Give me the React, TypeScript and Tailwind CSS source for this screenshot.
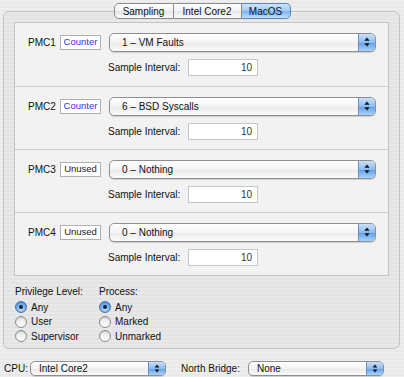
import { ReactNode } from "react";

const font = { fontFamily: '"Liberation Sans", Arial, sans-serif' };

function Arrows({ small }: { small?: boolean }) {
  return (
    <svg width="6" height={small ? 9 : 10} viewBox="0 0 6 10" className="block">
      <path d="M3 0.5 L5.6 3.8 L0.4 3.8 Z" fill="#111" />
      <path d="M3 9.5 L5.6 6.2 L0.4 6.2 Z" fill="#111" />
    </svg>
  );
}

function Popup({ label, className, small }: { label: string; className: string; small?: boolean }) {
  return (
    <div
      className={`flex items-stretch rounded-[5px] border border-[#8f8f8f] bg-[linear-gradient(to_bottom,#ffffff,#f3f3f3_50%,#e9e9e9_51%,#fbfbfb)] shadow-[0_1px_1px_rgba(0,0,0,0.15)] ${className}`}
    >
      <div className={`flex flex-1 items-center text-[10px] text-[#111] ${small ? "pl-[8px]" : "pl-[12px]"}`}>{label}</div>
      <div className="flex w-[17px] items-center justify-center rounded-r-[4px] border-l border-[#6b8fc4] bg-[linear-gradient(to_bottom,#c9e0fb,#8dbbf0_50%,#5e9de8_51%,#a8d4fb)]">
        <Arrows small={small} />
      </div>
    </div>
  );
}

function Radio({ on, children }: { on?: boolean; children: ReactNode }) {
  return (
    <div className="flex h-[14.5px] items-center gap-[4px] text-[10px] text-[#111]">
      {on ? (
        <span className="flex h-[12px] w-[12px] items-center justify-center rounded-full border border-[#4d6f9e] bg-[radial-gradient(circle_at_50%_70%,#bfe0ff,#5b9ae6_70%,#3f78c4)]">
          <span className="h-[4px] w-[4px] rounded-full bg-[#10203a]" />
        </span>
      ) : (
        <span className="h-[12px] w-[12px] rounded-full border border-[#8c8c8c] bg-[linear-gradient(to_bottom,#e6e6e6,#ffffff)] shadow-[inset_0_1px_1px_rgba(0,0,0,0.15)]" />
      )}
      <span>{children}</span>
    </div>
  );
}

const rows = [
  { pmc: "PMC1", kind: "Counter", event: "1 – VM Faults" },
  { pmc: "PMC2", kind: "Counter", event: "6 – BSD Syscalls" },
  { pmc: "PMC3", kind: "Unused", event: "0 – Nothing" },
  { pmc: "PMC4", kind: "Unused", event: "0 – Nothing" },
];

export default function App() {
  return (
    <div
      style={font}
      className="flex h-[377px] w-[404px] flex-col overflow-hidden bg-[repeating-linear-gradient(to_bottom,#eeeeee_0px,#eeeeee_2px,#e9e9e9_2px,#e9e9e9_4px)] pt-[3px]"
    >
      {/* tabs */}
      <div className="relative z-10 flex h-[16px] justify-center text-[10px] text-[#111]">
        <div className="flex w-[60px] items-center justify-center rounded-l-[5px] border border-[#8a8a8a] bg-[linear-gradient(to_bottom,#ffffff,#f2f2f2_50%,#e6e6e6_51%,#fafafa)]">
          Sampling
        </div>
        <div className="flex w-[68px] items-center justify-center border-y border-r border-[#8a8a8a] bg-[linear-gradient(to_bottom,#ffffff,#f2f2f2_50%,#e6e6e6_51%,#fafafa)]">
          Intel Core2
        </div>
        <div className="flex w-[49px] items-center justify-center rounded-r-[5px] border-y border-r border-[#5f84bb] bg-[linear-gradient(to_bottom,#cfe5fc,#9ec8f4_50%,#78b1ee_51%,#bfe0fd)]">
          MacOS
        </div>
      </div>

      {/* tab panel */}
      <div className="mx-[3px] -mt-[8px] flex h-[338px] w-[397px] flex-col rounded-[6px] border border-[#c4c4c4] bg-[rgba(0,0,0,0.025)] px-[10px] pt-[10px]">
        <div className="flex flex-col border border-[#c2c2c2] bg-[#f2f2f2]">
          {rows.map((r, i) => (
            <div
              key={r.pmc}
              className={`flex h-[63px] flex-col pl-[13px] pt-[10px] ${i > 0 ? "border-t border-[#cfcfcf]" : ""}`}
            >
              <div className="flex h-[18px] items-center">
                <span className="w-[32px] text-[10px] text-[#111]">{r.pmc}</span>
                <span
                  className={`flex h-[15px] w-[41px] items-center justify-center border border-[#b0b0b0] bg-white text-[9.5px] ${r.kind === "Counter" ? "text-[#3434d8]" : "text-[#222]"}`}
                >
                  {r.kind}
                </span>
                <Popup label={r.event} className="ml-[8px] h-[19px] w-[267px]" />
              </div>
              <div className="mt-[8px] flex h-[16px] items-center pl-[80px]">
                <span className="w-[80px] text-[10px] text-[#111]">Sample Interval:</span>
                <span className="flex h-[17px] w-[70px] items-center justify-end border border-[#c6c6c6] bg-white pr-[5px] text-[10px] text-[#333]">
                  10
                </span>
              </div>
            </div>
          ))}
        </div>

        {/* privilege / process */}
        <div className="mt-[8px] flex pl-[1px]">
          <div className="flex w-[84px] flex-col">
            <span className="mb-[2px] h-[14px] text-[10px] text-[#111]">Privilege Level:</span>
            <Radio on>Any</Radio>
            <Radio>User</Radio>
            <Radio>Supervisor</Radio>
          </div>
          <div className="flex flex-col">
            <span className="mb-[2px] h-[14px] text-[10px] text-[#111]">Process:</span>
            <Radio on>Any</Radio>
            <Radio>Marked</Radio>
            <Radio>Unmarked</Radio>
          </div>
        </div>
      </div>

      {/* bottom */}
      <div className="mt-[12px] flex h-[15px] items-center pl-[4px] text-[10px] text-[#111]">
        <span className="w-[26px]">CPU:</span>
        <Popup label="Intel Core2" className="h-[15px] w-[136px]" small />
        <span className="ml-[15px] w-[67px]">North Bridge:</span>
        <Popup label="None" className="h-[15px] w-[136px]" small />
      </div>
    </div>
  );
}
